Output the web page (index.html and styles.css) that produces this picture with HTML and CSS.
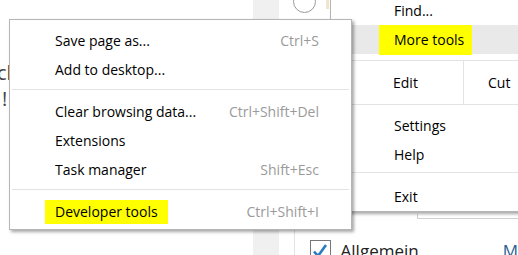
FILE: index.html
```
<!DOCTYPE html>
<html lang="en">
<head>
    <meta charset="UTF-8">
    <title>More tools menu</title>
    <link rel="stylesheet" href="styles.css">
</head>
<body>
    <div class="page">
        <div class="page-main">
            <p class="cut-text">cl</p>
            <p class="cut-text cut-bang">!</p>
        </div>
        <div class="page-strip"></div>
        <div class="page-side">
            <div class="side-top">
                <span class="radio"></span>
                <span class="tag"></span>
                <span class="side-line"></span>
            </div>
            <div class="side-bottom">
                <div class="side-gutter"></div>
                <div class="side-content">
                    <div class="side-rule"></div>
                    <div class="check-row">
                        <span class="checkbox">
                            <svg width="18" height="18" viewBox="0 0 18 18">
                                <path d="M3 9.5 L7 14 L15 3" fill="none" stroke="#2b7bbf" stroke-width="2.6"/>
                            </svg>
                        </span>
                        <span class="check-label">Allgemein</span>
                        <span class="check-more">M</span>
                    </div>
                </div>
            </div>
        </div>
    </div>

    <!-- main chrome menu (behind) -->
    <div class="menu menu-back">
        <div class="menu-row"><span class="label">Find...</span></div>
        <div class="menu-row row-hover"><span class="label label-mark">More tools</span></div>
        <div class="edit-row">
            <span class="edit-label">Edit</span>
            <span class="edit-btn">Cut</span>
        </div>
        <div class="menu-row row-settings"><span class="label">Settings</span></div>
        <div class="menu-row"><span class="label">Help</span></div>
        <div class="sep sep-back"></div>
        <div class="menu-row"><span class="label">Exit</span></div>
    </div>

    <!-- More tools submenu -->
    <div class="menu menu-front">
        <div class="menu-row"><span class="label">Save page as...</span><span class="key">Ctrl+S</span></div>
        <div class="menu-row"><span class="label">Add to desktop...</span></div>
        <div class="sep"></div>
        <div class="menu-row"><span class="label">Clear browsing data...</span><span class="key">Ctrl+Shift+Del</span></div>
        <div class="menu-row"><span class="label">Extensions</span></div>
        <div class="menu-row"><span class="label">Task manager</span><span class="key">Shift+Esc</span></div>
        <div class="sep"></div>
        <div class="menu-row"><span class="label label-mark">Developer tools</span><span class="key">Ctrl+Shift+I</span></div>
    </div>
</body>
</html>
```

FILE: styles.css
```
body {
    margin: 0;
    width: 518px;
    height: 255px;
    overflow: hidden;
    position: relative;
    background: #fff;
    font-family: "Open Sans", "Noto Sans", sans-serif;
    font-size: 14px;
    color: #000;
}

/* page behind the menus */
.page {
    display: flex;
    height: 255px;
}

.page-main {
    width: 264px;
    padding-top: 60px;
}

.cut-text {
    margin: 0 0 0 -3px;
    font-size: 20px;
    line-height: 26px;
    color: #444;
}

.cut-bang {
    margin-left: 2px;
}

.page-strip {
    width: 27px;
    background: #f0f0f0;
}

.page-side {
    flex: 1;
    display: flex;
    flex-direction: column;
    justify-content: space-between;
}

.side-top {
    display: flex;
    align-items: flex-start;
}

.radio {
    width: 21px;
    height: 21px;
    margin: -10px 0 0 14px;
    border: 1px solid #999;
    border-radius: 50%;
}

.tag {
    width: 3px;
    height: 9px;
    margin-left: 10px;
    background: #efe6cf;
}

.side-line {
    width: 1px;
    height: 30px;
    margin-left: 5px;
    background: #c8c8c8;
}

.side-bottom {
    display: flex;
    height: 41px;
}

.side-gutter {
    width: 15px;
    border-right: 1px solid #e2e2e2;
}

.side-content {
    flex: 1;
}

.side-rule {
    height: 4px;
    margin-left: 122px;
    border-left: 1px solid #d0d0d0;
    border-bottom: 1px solid #d0d0d0;
}

.check-row {
    display: flex;
    align-items: flex-start;
    margin-top: 21px;
    padding-left: 15px;
}

.checkbox {
    width: 19px;
    height: 19px;
    border: 1px solid #777;
    display: flex;
    align-items: center;
    justify-content: center;
}

.check-label {
    margin-left: 10px;
    font-size: 17px;
    line-height: 22px;
    color: #222;
}

.check-more {
    margin-left: 84px;
    font-size: 17px;
    line-height: 22px;
    color: #2b5f95;
}

/* menus */
.menu {
    position: absolute;
    background: #fff;
    border: 1px solid #b5b5b5;
    box-shadow: 2px 2px 3px rgba(0, 0, 0, 0.35);
}

.menu-front {
    left: 9px;
    top: 19px;
    width: 341px;
    padding: 6px 0 3px;
}

.menu-back {
    left: 330px;
    top: -5px;
    width: 220px;
}

.menu-row {
    display: flex;
    align-items: center;
    height: 29px;
    padding: 0 32px 0 35px;
}

.label {
    flex: 1;
    padding: 0 10px;
    line-height: 24px;
}

.label-mark {
    flex: none;
    background: #ffff00;
}

.key {
    margin-left: auto;
    color: #9a9a9a;
}

.sep {
    height: 1px;
    margin: 5px 2px 7px;
    background: #e3e3e3;
}

.menu-back .menu-row {
    padding: 0 0 0 48px;
}

.menu-back .label {
    padding: 0 8px 0 15px;
}

.row-hover {
    background: #e9e9e9;
}

.menu-back .label-mark {
    line-height: 30px;
}

.edit-row {
    display: flex;
    height: 43px;
    margin-top: 6px;
    border-top: 1px solid #e3e3e3;
    border-bottom: 1px solid #e3e3e3;
}

.edit-label {
    box-sizing: border-box;
    width: 133px;
    padding-left: 62px;
    display: flex;
    align-items: center;
    border-right: 1px solid #e3e3e3;
}

.edit-btn {
    display: flex;
    align-items: center;
    padding-left: 24px;
}

.row-settings {
    margin-top: 6px;
}

.sep-back {
    margin: 3px 0 9px;
}
```
